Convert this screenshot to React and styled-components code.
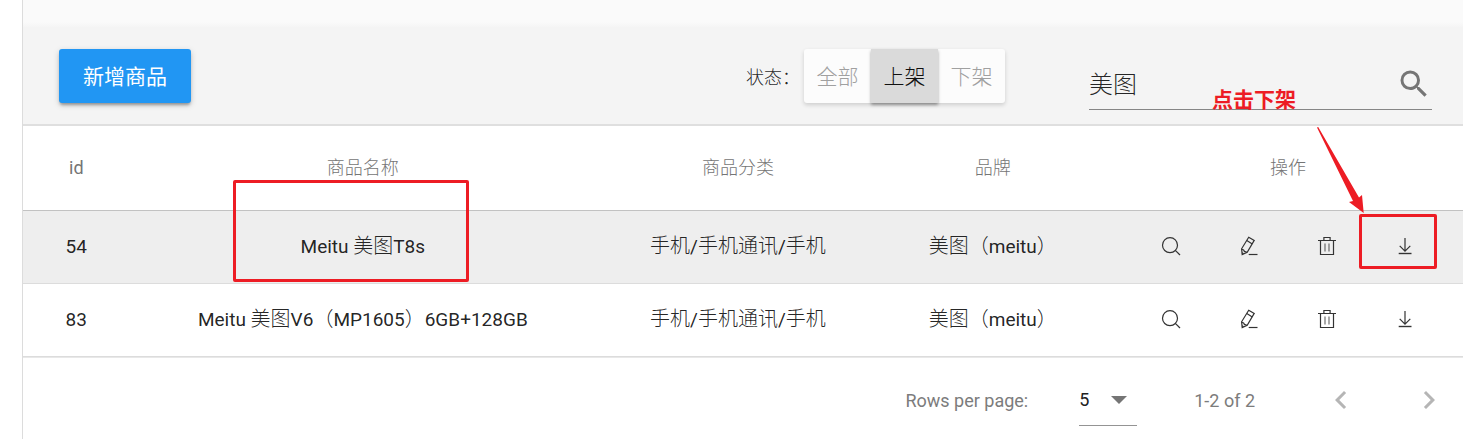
import React, { useState } from 'react';
import styled, { createGlobalStyle, css } from 'styled-components';

const GlobalStyle = createGlobalStyle`
  *, *::before, *::after { box-sizing: border-box; }
  body {
    margin: 0;
    background: #fff;
    color: rgba(0, 0, 0, 0.87);
    font-family: Roboto, "Noto Sans CJK SC", sans-serif;
  }
  button, input, select { font-family: inherit; color: inherit; }
`;

const red = '#ed1c24';

const Page = styled.div`
  display: flex;
  min-height: 100vh;
`;

const Drawer = styled.aside`
  flex: none;
  width: 23px;
  background: #fff;
  border-right: 1px solid #dcdcdc;
`;

const Main = styled.main`
  position: relative;
  flex: 1;
  min-width: 0;
`;

const TopStrip = styled.div`
  height: 27px;
  background: linear-gradient(#fafafa 22px, #f5f5f5);
`;

const Toolbar = styled.header`
  display: flex;
  align-items: center;
  height: 99px;
  padding: 0 31px 0 36px;
  background: #f4f4f4;
  border-bottom: 2px solid #dfdfdf;
`;

const Spacer = styled.div`
  flex: 1;
`;

const PrimaryButton = styled.button`
  height: 54px;
  padding: 0 24px 2px;
  border: 0;
  border-radius: 3px;
  background: #2196f3;
  color: #fff;
  font-size: 21px;
  box-shadow: 0 3px 3px -1px rgba(0, 0, 0, 0.3), 0 2px 6px rgba(0, 0, 0, 0.18);
`;

const StatusLabel = styled.span`
  margin-right: 4px;
  font-size: 18px;
  font-weight: 300;
`;

const ToggleGroup = styled.div`
  display: flex;
  margin-right: 84px;
  border-radius: 3px;
  background: #fcfcfc;
  box-shadow: 0 2px 4px rgba(0, 0, 0, 0.16);
`;

const ToggleButton = styled.button`
  width: 67px;
  height: 54px;
  padding: 0 0 2px;
  border: 0;
  background: transparent;
  color: #a0a0a0;
  font-size: 21px;
  font-weight: 300;
  ${({ $active }) =>
    $active &&
    css`
      background: #dadada;
      color: #111;
      box-shadow: 0 2px 3px rgba(0, 0, 0, 0.35);
    `}
`;

const SearchField = styled.label`
  display: flex;
  align-items: center;
  align-self: flex-end;
  width: 343px;
  height: 51px;
  margin-bottom: 14px;
  border-bottom: 1px solid #868686;
`;

const SearchInput = styled.input`
  flex: 1;
  min-width: 0;
  padding: 0 0 4px;
  border: 0;
  outline: 0;
  background: transparent;
  font-size: 24px;
  font-weight: 300;
`;

const Table = styled.table`
  width: 100%;
  table-layout: fixed;
  border-collapse: collapse;
`;

const Col = styled.col`
  width: ${({ $width }) => $width};
`;

const HeadCell = styled.th`
  height: 84px;
  padding: ${({ $actions }) => ($actions ? '0 0 0 7px' : '0')};
  border-bottom: 1px solid #c2c2c2;
  color: #757575;
  font-size: 18px;
  font-weight: ${({ $strong }) => ($strong ? 400 : 300)};
  line-height: 24px;
`;

const Row = styled.tr`
  background: ${({ $hover }) => ($hover ? '#eee' : '#fff')};
  border-bottom: 1px solid #dcdcdc;
`;

const Cell = styled.td`
  position: relative;
  height: 73px;
  padding: ${({ $actions }) => ($actions ? '0 0 2px 7px' : '0')};
  font-size: 19px;
  line-height: 24px;
  text-align: center;
  white-space: nowrap;
`;

const Han = styled.span`
  font-size: 20px;
  font-weight: 300;
`;

const Actions = styled.div`
  display: flex;
  justify-content: center;
  gap: 24px;
`;

const IconButton = styled.button`
  position: relative;
  display: grid;
  place-items: center;
  width: 54px;
  height: 54px;
  padding: 0;
  border: 0;
  background: transparent;
`;

const Footer = styled.footer`
  display: flex;
  align-items: center;
  justify-content: flex-end;
  height: 82px;
  padding: 4px 7px 0 0;
  border-top: 1px solid #e8e8e8;
  color: #7c7c7c;
  font-size: 18px;
`;

const PageSize = styled.label`
  display: flex;
  align-items: center;
  gap: 51px;
`;

const SelectBox = styled.span`
  position: relative;
  display: flex;
  align-items: center;
  width: 58px;
  height: 52px;
  border-bottom: 1px solid #949494;
`;

const Select = styled.select`
  width: 100%;
  padding: 0;
  border: 0;
  outline: 0;
  appearance: none;
  background: transparent;
  color: #212121;
  font-size: 18px;
`;

const Caret = styled.svg`
  position: absolute;
  right: 10px;
  pointer-events: none;
`;

const Range = styled.span`
  margin: 0 59px 0 57px;
`;

const Pager = styled.nav`
  display: flex;
  gap: 34px;
  color: #b5b5b5;
`;

const MarkBox = styled.span`
  position: absolute;
  border: 3px solid ${red};
  border-radius: 2px;
  pointer-events: none;
`;

const NameMark = styled(MarkBox)`
  top: -31px;
  left: calc(50% - 130px);
  width: 236px;
  height: 102px;
`;

const ActionMark = styled(MarkBox)`
  top: -5px;
  left: -19px;
  width: 78px;
  height: 55px;
`;

const Note = styled.strong`
  position: absolute;
  top: 85px;
  right: 167px;
  color: ${red};
  font-size: 21px;
  line-height: 30px;
`;

const Arrow = styled.svg`
  position: absolute;
  top: 126px;
  right: 98px;
  z-index: 1;
  pointer-events: none;
`;

const shapes = {
  view: (
    <>
      <circle cx="9" cy="9.2" r="7.5" />
      <path d="M14.3 14.3 19 19" />
    </>
  ),
  edit: (
    <>
      <path d="M9.7 1.3 15.2 4.4 8.2 16.2 3.2 18.6 2.6 12.8Z" />
      <path d="M7.8 4.6 13.3 7.9M2.6 13.2 4.6 14 5.4 15.4 8 16.3M3 16.8 4.6 17.8" />
      <path d="M9.7 18.5H18.5" />
    </>
  ),
  remove: (
    <>
      <path d="M1 4.5H19M6.9 4.5V1.5H13.1V4.5M3.5 4.5V18.5H16.5V4.5" />
      <path d="M8 7.5V15.5M12 7.5V15.5" strokeOpacity="0.7" />
    </>
  ),
  unshelve: (
    <>
      <path d="M10 2V15M4.7 9.8 10 15.1 15.3 9.8" />
      <path d="M3.7 17.5H16.5" strokeWidth="1.4" />
    </>
  ),
};

const ActionIcon = ({ shape }) => (
  <svg width="20" height="20" viewBox="0 0 20 20" fill="none" stroke="#333" strokeWidth="1.2" aria-hidden="true">
    {shapes[shape]}
  </svg>
);

const Chevron = ({ d }) => (
  <svg width="36" height="36" viewBox="0 0 24 24" fill="currentColor" aria-hidden="true">
    <path d={d} />
  </svg>
);

const statuses = ['全部', '上架', '下架'];

const actions = [
  { shape: 'view', label: '查看' },
  { shape: 'edit', label: '编辑' },
  { shape: 'remove', label: '删除' },
  { shape: 'unshelve', label: '下架' },
];

const goods = [
  { id: 54, name: 'Meitu 美图T8s', marked: true },
  { id: 83, name: 'Meitu 美图V6（MP1605）6GB+128GB' },
];

// Splits a string into Latin and Chinese runs so that each gets its own weight.
const MixedText = ({ text }) =>
  text
    .split(/([^\x00-\x7f]+)/)
    .map((part, i) => (i % 2 ? <Han key={i}>{part}</Han> : part));

export default function App() {
  const [status, setStatus] = useState('上架');
  const [keyword, setKeyword] = useState('美图');

  return (
    <Page>
      <GlobalStyle />
      <Drawer />
      <Main>
        <TopStrip />
        <Toolbar>
          <PrimaryButton type="button">新增商品</PrimaryButton>
          <Spacer />
          <StatusLabel id="status-label">状态：</StatusLabel>
          <ToggleGroup role="group" aria-labelledby="status-label">
            {statuses.map((item) => (
              <ToggleButton
                key={item}
                type="button"
                $active={item === status}
                aria-pressed={item === status}
                onClick={() => setStatus(item)}
              >
                {item}
              </ToggleButton>
            ))}
          </ToggleGroup>
          <SearchField>
            <SearchInput
              aria-label="搜索"
              value={keyword}
              onChange={(e) => setKeyword(e.target.value)}
            />
            <svg width="36" height="36" viewBox="0 0 24 24" fill="#757575" aria-hidden="true">
              <path d="M15.5 14h-.79l-.28-.27A6.47 6.47 0 0 0 16 9.5 6.5 6.5 0 1 0 9.5 16c1.61 0 3.09-.59 4.23-1.57l.27.28v.79l5 4.99L20.49 19l-4.99-5zm-6 0C7.01 14 5 11.99 5 9.5S7.01 5 9.5 5 14 7.01 14 9.5 11.99 14 9.5 14z" />
            </svg>
          </SearchField>
        </Toolbar>

        <Table>
          <colgroup>
            <Col $width="7.4%" />
            <Col $width="32.4%" />
            <Col $width="19.7%" />
            <Col $width="15.7%" />
            <Col $width="24.8%" />
          </colgroup>
          <thead>
            <tr>
              <HeadCell $strong>id</HeadCell>
              <HeadCell>商品名称</HeadCell>
              <HeadCell>商品分类</HeadCell>
              <HeadCell>品牌</HeadCell>
              <HeadCell $actions>操作</HeadCell>
            </tr>
          </thead>
          <tbody>
            {goods.map(({ id, name, marked }) => (
              <Row key={id} $hover={marked}>
                <Cell>{id}</Cell>
                <Cell>
                  <MixedText text={name} />
                  {marked && <NameMark />}
                </Cell>
                <Cell>
                  <MixedText text="手机/手机通讯/手机" />
                </Cell>
                <Cell>
                  <MixedText text="美图（meitu）" />
                </Cell>
                <Cell $actions>
                  <Actions>
                    {actions.map(({ shape, label }) => (
                      <IconButton key={shape} type="button" aria-label={label}>
                        <ActionIcon shape={shape} />
                        {marked && shape === 'unshelve' && <ActionMark />}
                      </IconButton>
                    ))}
                  </Actions>
                </Cell>
              </Row>
            ))}
          </tbody>
        </Table>

        <Footer>
          <PageSize>
            Rows per page:
            <SelectBox>
              <Select defaultValue="5">
                <option>5</option>
                <option>10</option>
                <option>25</option>
              </Select>
              <Caret width="16" height="8" viewBox="0 0 16 8" aria-hidden="true">
                <path d="M0 0H16L8 8Z" fill="#757575" />
              </Caret>
            </SelectBox>
          </PageSize>
          <Range>1-2 of 2</Range>
          <Pager aria-label="pagination">
            <IconButton type="button" disabled aria-label="previous">
              <Chevron d="M15.41 7.41 14 6l-6 6 6 6 1.41-1.41L10.83 12z" />
            </IconButton>
            <IconButton type="button" disabled aria-label="next">
              <Chevron d="M10 6 8.59 7.41 13.17 12l-4.58 4.59L10 18l6-6z" />
            </IconButton>
          </Pager>
        </Footer>

        <Note>点击下架</Note>
        <Arrow width="50" height="90" viewBox="0 0 50 90" aria-hidden="true">
          <path d="M2 1.5 3.2 1 44 71.5 47 69 48.7 87 34 76 38 75Z" fill={red} />
        </Arrow>
      </Main>
    </Page>
  );
}
